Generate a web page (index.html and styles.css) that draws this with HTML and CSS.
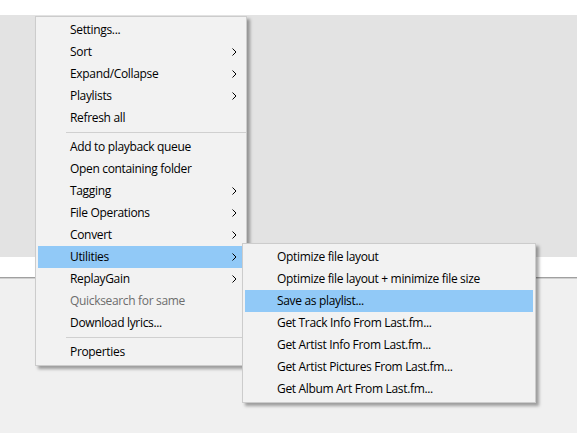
FILE: index.html
```html
<!DOCTYPE html>
<html>
<head>
<meta charset="utf-8">
<link rel="stylesheet" href="styles.css">
</head>
<body>
<div class="app">
  <div class="top-strip"></div>
  <div class="panel"></div>
  <div class="white-strip"></div>
  <div class="divider"></div>
  <div class="lower"></div>
</div>

<div class="menu main-menu">
  <div class="item">Settings...</div>
  <div class="item sub">Sort<svg class="chev" viewBox="0 0 5 8"><path d="M0.5 0.5 L4 4 L0.5 7.5"/></svg></div>
  <div class="item sub">Expand/Collapse<svg class="chev" viewBox="0 0 5 8"><path d="M0.5 0.5 L4 4 L0.5 7.5"/></svg></div>
  <div class="item sub">Playlists<svg class="chev" viewBox="0 0 5 8"><path d="M0.5 0.5 L4 4 L0.5 7.5"/></svg></div>
  <div class="item">Refresh all</div>
  <div class="sep"></div>
  <div class="item">Add to playback queue</div>
  <div class="item">Open containing folder</div>
  <div class="item sub">Tagging<svg class="chev" viewBox="0 0 5 8"><path d="M0.5 0.5 L4 4 L0.5 7.5"/></svg></div>
  <div class="item sub">File Operations<svg class="chev" viewBox="0 0 5 8"><path d="M0.5 0.5 L4 4 L0.5 7.5"/></svg></div>
  <div class="item sub">Convert<svg class="chev" viewBox="0 0 5 8"><path d="M0.5 0.5 L4 4 L0.5 7.5"/></svg></div>
  <div class="item sub active">Utilities<svg class="chev" viewBox="0 0 5 8"><path d="M0.5 0.5 L4 4 L0.5 7.5"/></svg></div>
  <div class="item sub">ReplayGain<svg class="chev" viewBox="0 0 5 8"><path d="M0.5 0.5 L4 4 L0.5 7.5"/></svg></div>
  <div class="item disabled">Quicksearch for same</div>
  <div class="item">Download lyrics...</div>
  <div class="sep"></div>
  <div class="item">Properties</div>
</div>

<div class="menu sub-menu">
  <div class="item">Optimize file layout</div>
  <div class="item">Optimize file layout + minimize file size</div>
  <div class="item active">Save as playlist...</div>
  <div class="item">Get Track Info From Last.fm...</div>
  <div class="item">Get Artist Info From Last.fm...</div>
  <div class="item">Get Artist Pictures From Last.fm...</div>
  <div class="item">Get Album Art From Last.fm...</div>
</div>
</body>
</html>
```

FILE: styles.css
```css
html, body {
  margin: 0;
  padding: 0;
}
body {
  width: 577px;
  height: 433px;
  overflow: hidden;
  background: #f0f0f0;
  font-family: "Open Sans", "Noto Sans", sans-serif;
  font-size: 12px;
  letter-spacing: -0.33px;
  color: #000;
}
.app {
  display: flex;
  flex-direction: column;
  height: 433px;
}
.top-strip {
  height: 15px;
  background: #ffffff;
}
.panel {
  height: 242px;
  background: #e3e3e3;
}
.white-strip {
  height: 20px;
  background: #ffffff;
}
.divider {
  height: 1px;
  background: #a0a0a0;
  border-bottom: 1px solid #d0d0d0;
}
.lower {
  flex: 1;
  background: #f0f0f0;
}

.menu {
  position: absolute;
  background: #f2f2f2;
  border: 1px solid #cccccc;
  padding: 2px 0;
  box-shadow: 3px 3px 3px rgba(0, 0, 0, 0.35);
  box-sizing: border-box;
}
.main-menu {
  left: 35px;
  top: 16px;
  width: 212px;
  height: 350px;
}
.sub-menu {
  left: 242px;
  top: 243px;
  width: 294px;
  height: 160px;
}
.item {
  position: relative;
  height: 22px;
  line-height: 22px;
  margin: 0 3px 0 2px;
  padding-left: 32px;
  white-space: nowrap;
}
.sub-menu .item {
  margin: 0 2px 0 2px;
}
.item.active {
  background: #91c9f7;
}
.item.disabled {
  color: #6d6d6d;
}
.chev {
  position: absolute;
  right: 6px;
  top: 7px;
  width: 5px;
  height: 8px;
  fill: none;
  stroke: #000;
  stroke-width: 1;
}
.sep {
  height: 7px;
  margin-left: 30px;
  position: relative;
}
.sep::after {
  content: "";
  position: absolute;
  left: 0;
  right: 0;
  top: 3px;
  height: 1px;
  background: #d0d0d0;
}
```
